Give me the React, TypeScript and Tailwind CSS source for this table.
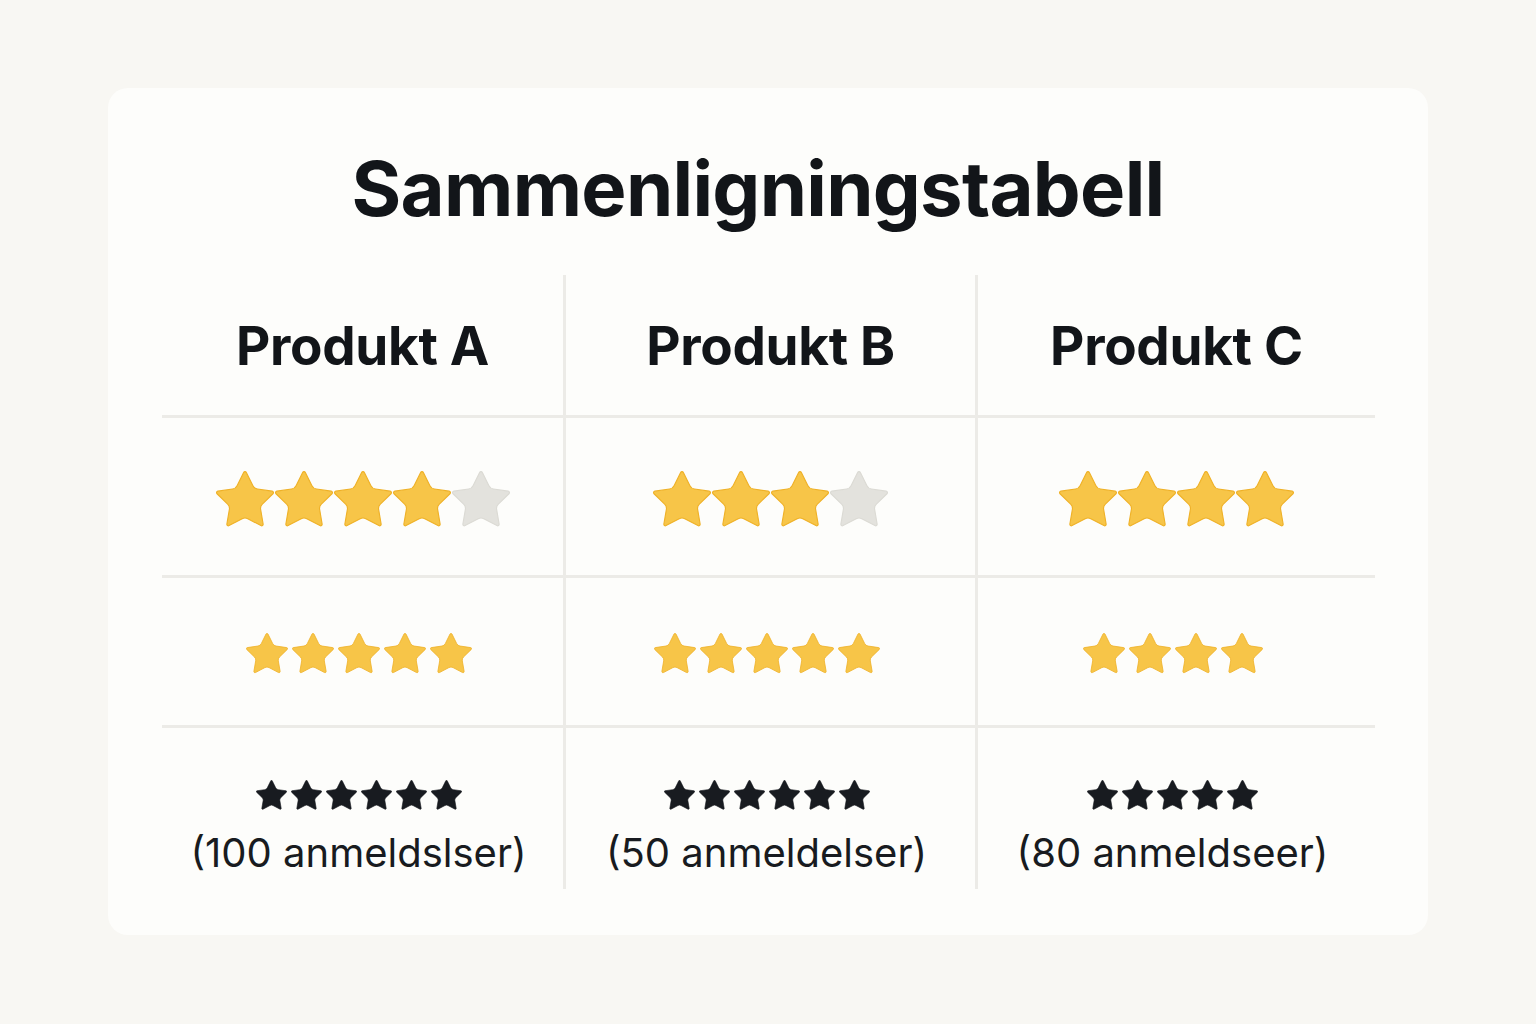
import React from 'react';

const STAR =
  'M11.525 2.295a.53.53 0 0 1 .95 0l2.31 4.679a2.123 2.123 0 0 0 1.595 1.16l5.166.756a.53.53 0 0 1 .294.904l-3.736 3.638a2.123 2.123 0 0 0-.611 1.878l.882 5.14a.53.53 0 0 1-.771.56l-4.618-2.428a2.122 2.122 0 0 0-1.973 0L6.396 21.01a.53.53 0 0 1-.77-.56l.881-5.139a2.122 2.122 0 0 0-.611-1.879L2.16 9.795a.53.53 0 0 1 .294-.906l5.165-.755a2.122 2.122 0 0 0 1.597-1.16z';

const Star = ({ size, fill, stroke }: { size: number; fill: string; stroke: string }) => (
  <svg width={size} height={size} viewBox="1.8 1.8 20.4 20.4" aria-hidden>
    <path d={STAR} fill={fill} stroke={stroke} strokeWidth={0.4} strokeLinejoin="round" />
  </svg>
);

const Stars = ({ count, empty = 0, size, gap }: { count: number; empty?: number; size: number; gap: string }) => (
  <div className={`flex items-center ${gap}`}>
    {Array.from({ length: count }).map((_, i) => (
      <Star key={i} size={size} fill="#f7c548" stroke="#efb127" />
    ))}
    {Array.from({ length: empty }).map((_, i) => (
      <Star key={'e' + i} size={size} fill="#e3e2dd" stroke="#dbdad4" />
    ))}
  </div>
);

const DarkStars = ({ count }: { count: number }) => (
  <div className="flex items-center gap-[4px]">
    {Array.from({ length: count }).map((_, i) => (
      <Star key={i} size={31} fill="#181b20" stroke="#181b20" />
    ))}
  </div>
);

const products = [
  { name: 'Produkt A', big: [4, 1], small: 5, dark: 6, reviews: '(100 anmeldslser)' },
  { name: 'Produkt B', big: [3, 1], small: 5, dark: 6, reviews: '(50 anmeldelser)' },
  { name: 'Produkt C', big: [4, 0], small: 4, dark: 5, reviews: '(80 anmeldseer)' },
];

const App = () => {
  return (
    <div className="min-h-screen w-full bg-[#f8f7f3] pt-[88px] px-[108px]" style={{ fontFamily: 'Inter, "Noto Sans", sans-serif' }}>
      <div className="w-[1320px] h-[847px] rounded-[20px] bg-[#fdfdfb] pt-[62px] px-[54px]">
        <h1 className="pr-[20px] text-center text-[76px] leading-none font-bold tracking-[-0.7px] text-[#121519]">
          Sammenligningstabell
        </h1>

        <div className="mt-[49px] grid grid-cols-[401px_412px_1fr] w-[1213px]">
          {products.map((p, i) => (
            <div key={p.name} className={`flex flex-col ${i > 0 ? 'border-l-[3px] border-[#ecebe7]' : ''}`}>
              <div className="h-[143px] pt-[3px] flex items-center justify-center border-b-[3px] border-[#ecebe7]">
                <span className="text-[53px] font-bold text-[#121519] tracking-[-0.3px]">{p.name}</span>
              </div>
              <div className="h-[160px] pt-[6px] flex items-center justify-center border-b-[3px] border-[#ecebe7]">
                <Stars count={p.big[0]} empty={p.big[1]} size={58} gap="gap-[1px]" />
              </div>
              <div className="h-[150px] pt-[4px] pr-[8px] flex items-center justify-center border-b-[3px] border-[#ecebe7]">
                <Stars count={p.small} size={42} gap="gap-[4px]" />
              </div>
              <div className="h-[161px] flex flex-col items-center pt-[52px] pr-[8px]">
                <DarkStars count={p.dark} />
                <span className="mt-[22px] text-[40px] leading-none text-[#181b20]">{p.reviews}</span>
              </div>
            </div>
          ))}
        </div>
      </div>
    </div>
  );
};

export default App;
